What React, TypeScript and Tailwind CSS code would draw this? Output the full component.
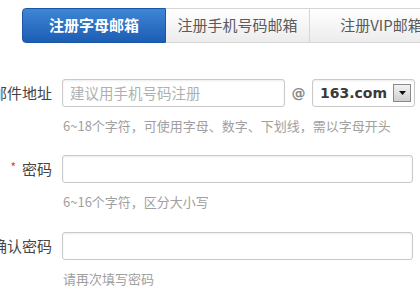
const cjk = { fontFamily: '"Noto Sans CJK SC", "Noto Sans", sans-serif' };

function Tabs() {
  return (
    <div className="flex h-[35px] ml-[22px] w-[460px]">
      <div className="w-[144px] shrink-0 flex items-center justify-center rounded-l-[4px] bg-gradient-to-b from-[#3f86d6] to-[#1b5db3] border border-[#1a56a6] text-white font-bold text-[15px]">
        注册字母邮箱
      </div>
      <div className="w-[144px] shrink-0 flex items-center justify-center bg-gradient-to-b from-[#ffffff] to-[#ececec] border-y border-r border-[#d6d6d6] text-[#5a5a5a] text-[15px]">
        注册手机号码邮箱
      </div>
      <div className="w-[144px] shrink-0 flex items-center justify-center bg-gradient-to-b from-[#ffffff] to-[#ececec] border-y border-r border-[#d6d6d6] text-[#5a5a5a] text-[15px]">
        注册VIP邮箱
      </div>
    </div>
  );
}

function Label({ text, required }: { text: string; required?: boolean }) {
  return (
    <div className="w-[52px] shrink-0 flex justify-end items-center mr-[10px]">
      <span className="whitespace-nowrap shrink-0 text-[15px] text-[#444]">
        {required && <span className="text-[#e03a3a] text-[12px] mr-[6px] relative -top-[3px]">*</span>}
        {text}
      </span>
    </div>
  );
}

function Hint({ text }: { text: string }) {
  return <div className="ml-[63px] mt-[10px] h-[18px] leading-[18px] text-[13px] text-[#a0a0a0] whitespace-nowrap">{text}</div>;
}

function Box({ className, children }: { className: string; children?: React.ReactNode }) {
  return (
    <div className={"h-[28px] border border-[#c9c9c9] rounded-[3px] bg-white shadow-[inset_0_1px_2px_rgba(0,0,0,0.08)] flex items-center " + className}>
      {children}
    </div>
  );
}

export default function App() {
  return (
    <div className="w-[420px] h-[300px] overflow-hidden bg-white pt-[8px]" style={cjk}>
      <Tabs />

      <div className="mt-[36px]">
        <div className="flex items-center">
          <Label text="邮件地址" />
          <Box className="w-[223px] px-[7px]">
            <span className="text-[14.5px] text-[#b0b0b0] whitespace-nowrap">建议用手机号码注册</span>
          </Box>
          <span className="w-[27px] text-center text-[14px] font-bold text-[#888]" style={{ fontFamily: '"DejaVu Sans", sans-serif' }}>@</span>
          <Box className="w-[103px] pl-[7px] pr-[3px] justify-between">
            <span className="text-[14px] font-bold text-[#3a3a3a]" style={{ fontFamily: '"DejaVu Sans", sans-serif' }}>163.com</span>
            <span className="w-[18px] h-[18px] border border-[#8a8a8a] bg-gradient-to-b from-[#f2f2f2] to-[#cfcfcf] flex items-center justify-center">
              <svg width="7" height="4" viewBox="0 0 7 4"><path d="M0 0h7L3.5 4z" fill="#111" /></svg>
            </span>
          </Box>
        </div>
        <Hint text="6~18个字符，可使用字母、数字、下划线，需以字母开头" />
      </div>

      <div className="mt-[20px]">
        <div className="flex items-center">
          <Label text="密码" required />
          <Box className="w-[351px]" />
        </div>
        <Hint text="6~16个字符，区分大小写" />
      </div>

      <div className="mt-[21px]">
        <div className="flex items-center">
          <Label text="确认密码" />
          <Box className="w-[351px]" />
        </div>
        <Hint text="请再次填写密码" />
      </div>
    </div>
  );
}
